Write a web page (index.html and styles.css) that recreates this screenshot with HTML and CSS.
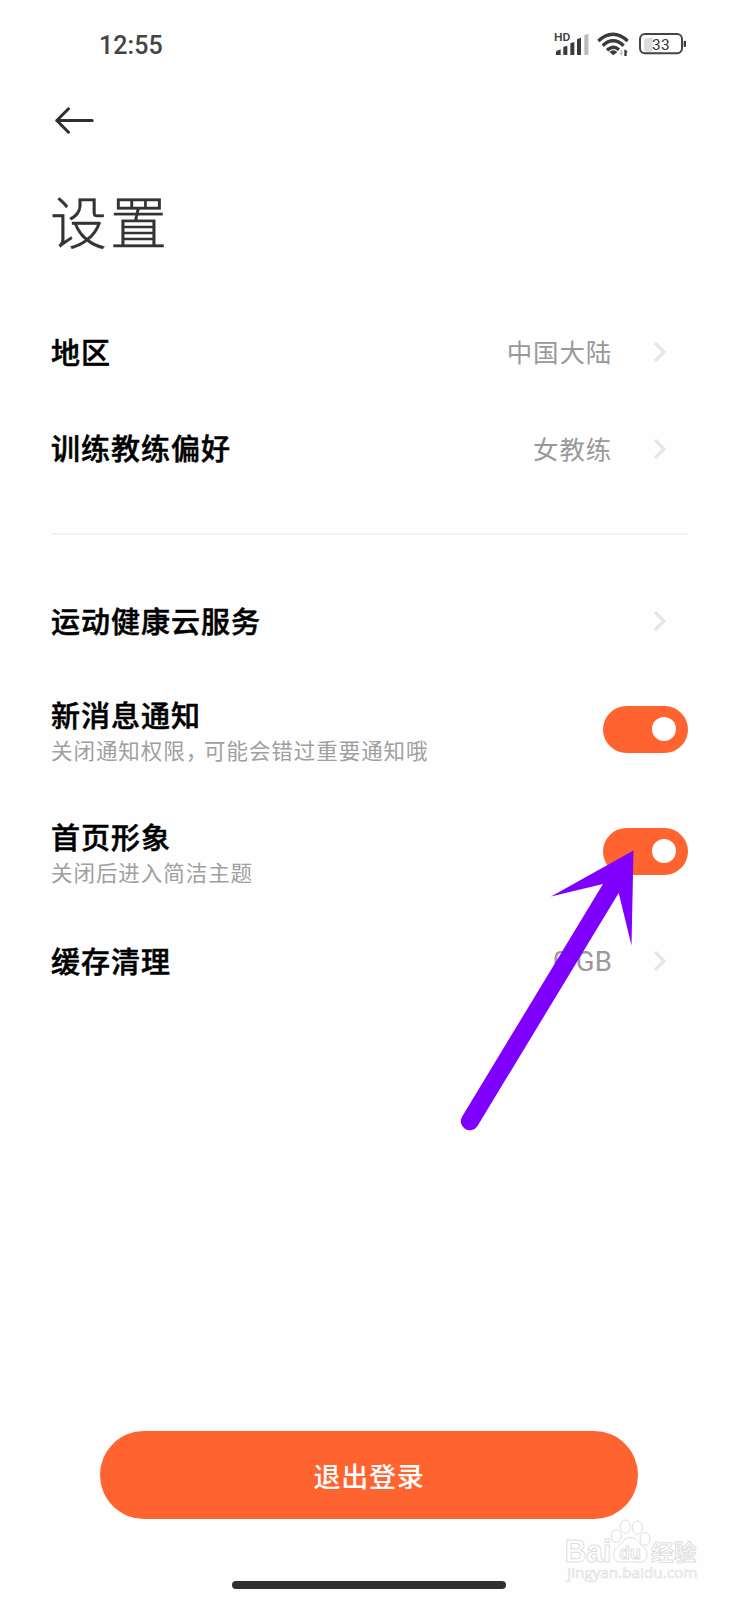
FILE: index.html
```
<!DOCTYPE html>
<html lang="zh-CN">
<head>
<meta charset="utf-8">
<title>设置</title>
<link rel="stylesheet" href="styles.css">
</head>
<body>
<div class="screen">
  <header class="status">
    <span class="time">12:55</span>
    <svg class="status-icons" width="180" height="60" viewBox="0 0 540 180">
      <text class="hd" x="72" y="79" textLength="49" lengthAdjust="spacingAndGlyphs">HD</text>
      <g fill="#3a3a3a">
        <path d="M78 120v-9q0-3 3-4l11-4v17z"/>
        <path d="M100 120V96l12-4v28z"/>
        <path d="M121 120V85l12-4v39z"/>
        <path d="M141 120V73l12-5v52z"/>
        <path d="M163 120V61l12-5v64z" fill="#bbb"/>
        <path d="M250 121l-12-10q12-10 24 0z"/>
        <path d="M283 123v-19h4l7 8h-4v11z"/>
        <path d="M277 104v19l-9-9h4v-8z" fill="#bbb"/>
        <rect x="461" y="77" width="7" height="19" rx="3"/>
      </g>
      <g fill="none" stroke="#3a3a3a" stroke-width="10">
        <path d="M205 78Q249 38 293 78"/>
        <path d="M218 92Q249 63 281 92"/>
        <path d="M231 106Q250 88 267 104"/>
      </g>
      <path d="M351 68h17v42h-17q-9 0-9-9V77q0-9 9-9z" fill="#ddd"/>
      <rect x="330" y="57" width="126" height="58" rx="15" fill="none" stroke="#444" stroke-width="6"/>
      <text class="charge" x="366" y="105" textLength="53">33</text>
    </svg>
  </header>

  <nav class="nav">
    <svg width="40" height="28" viewBox="0 0 40 28" fill="none" stroke="#2f2f2f" stroke-width="3" stroke-linecap="round" stroke-linejoin="round">
      <path d="M2.8 14.5H38.2M14.5 2.8L2.8 14.5 14.5 26.2"/>
    </svg>
  </nav>
  <h1 class="title">设置</h1>

  <main class="list">
    <div class="row region">
      <span class="label">地区</span><span class="value">中国大陆</span>
      <svg class="chev" viewBox="0 0 14 22"><path d="M2 2l9 9-9 9"/></svg>
    </div>
    <div class="row coach">
      <span class="label">训练教练偏好</span><span class="value">女教练</span>
      <svg class="chev" viewBox="0 0 14 22"><path d="M2 2l9 9-9 9"/></svg>
    </div>
    <hr class="divider">
    <div class="row cloud">
      <span class="label">运动健康云服务</span>
      <svg class="chev" viewBox="0 0 14 22"><path d="M2 2l9 9-9 9"/></svg>
    </div>
    <div class="row double">
      <div class="stack">
        <span class="label">新消息通知</span>
        <span class="sub">关闭通知权限<span class="comma">，</span>可能会错过重要通知哦</span>
      </div>
      <span class="switch"><i class="knob"></i></span>
    </div>
    <div class="row double">
      <div class="stack">
        <span class="label">首页形象</span>
        <span class="sub">关闭后进入简洁主题</span>
      </div>
      <span class="switch"><i class="knob"></i></span>
    </div>
    <div class="row cache">
      <span class="label">缓存清理</span><span class="value latin">0 GB</span>
      <svg class="chev" viewBox="0 0 14 22"><path d="M2 2l9 9-9 9"/></svg>
    </div>
  </main>

  <footer class="footer">
    <button class="logout">退出登录</button>
    <div class="home-bar"></div>
  </footer>

  <svg class="pointer" width="190" height="290" viewBox="450 845 190 290">
    <path fill="#8000ff" d="M633.5 850.5L631.5 945.5 618.7 893 477.5 1126A9 9 0 0 1 462.2 1116.5L603 884 551 896.5z"/>
  </svg>

  <svg class="watermark" width="188" height="100" viewBox="0 0 564 300">
    <g fill="#fff" stroke="#dedede" stroke-width="3">
      <text class="wm-brand" x="44" y="186" textLength="140" lengthAdjust="spacingAndGlyphs">Bai</text>
      <ellipse cx="199" cy="108" rx="15" ry="19"/>
      <ellipse cx="226" cy="80" rx="15" ry="20"/>
      <ellipse cx="262" cy="83" rx="15" ry="20"/>
      <ellipse cx="285" cy="117" rx="15" ry="19"/>
      <path d="M240 112c-17 0-23 15-31 23s-18 14-18 30c0 15 10 22 24 22 10 0 16-2 26-2s16 2 26 2c14 0 24-7 24-22 0-16-10-22-18-30s-15-23-33-23z"/>
      <text class="wm-du" x="208" y="176" textLength="64" lengthAdjust="spacingAndGlyphs">du</text>
      <text class="wm-cn" x="303" y="180" textLength="136" lengthAdjust="spacingAndGlyphs">经验</text>
      <text class="wm-url" x="52" y="235" textLength="390" lengthAdjust="spacingAndGlyphs">jingyan.baidu.com</text>
    </g>
  </svg>
</div>
</body>
</html>
```
FILE: styles.css
```
* { box-sizing: border-box; }
body {
  margin: 0;
  background: #fdfdfd;
  font-family: "Noto Sans CJK SC", sans-serif;
}
.screen {
  position: relative;
  display: flex;
  flex-direction: column;
  width: 738px;
  height: 1600px;
  overflow: hidden;
  background: #fefefe;
}
.status {
  display: flex;
  justify-content: space-between;
  height: 75px;
  padding: 15px 28px 0 99px;
}
.time {
  font: 500 25px/61px Roboto, sans-serif;
  letter-spacing: 0.1px;
  color: #444;
}
.hd { font: 600 32px Roboto, sans-serif; fill: #444; }
.charge { font: 400 46px Roboto, sans-serif; fill: #333; }
.nav { height: 60px; padding: 31px 0 0 54px; line-height: 0; }
.title {
  height: 165px;
  margin: 0;
  padding: 42px 0 0 50px;
  font-size: 57px;
  font-weight: 300;
  line-height: 84px;
  letter-spacing: 3px;
  color: #333;
  -webkit-text-stroke: 0.3px #333;
}
.list { padding: 0 50px 0 51px; }
.row { display: flex; align-items: center; }
.region { height: 104px; }
.coach { height: 89px; }
.divider { height: 2px; margin: 40px 0 0; border: 0; background: #f3f3f3; }
.cloud { height: 62px; margin: 55px 0 16px; }
.double { height: 122px; }
.cache { height: 64px; margin-top: 17px; }
.label {
  flex: 1;
  padding-bottom: 3px;
  font-size: 29px;
  font-weight: 500;
  line-height: 42px;
  letter-spacing: 1px;
  color: #000;
  white-space: nowrap;
  -webkit-text-stroke: 0.5px #000;
}
.value {
  margin-right: 41px;
  padding-bottom: 2px;
  font-size: 25.5px;
  line-height: 38px;
  letter-spacing: 0.8px;
  color: #999;
}
.latin { padding: 1px 0 0; font-family: Roboto, sans-serif; font-size: 27.5px; letter-spacing: 0.2px; font-weight: 400; }
.chev {
  width: 14px;
  height: 22px;
  margin-right: 21px;
  fill: none;
  stroke: #e6e6e6;
  stroke-width: 3.2;
}
.stack { flex: 1; display: flex; flex-direction: column; padding-top: 2px; }
.stack .label { line-height: 39px; padding-bottom: 0; }
.sub {
  font-size: 21.5px;
  line-height: 32px;
  letter-spacing: 0.95px;
  font-weight: 400;
  color: #a0a0a0;
  white-space: nowrap;
}
.comma { letter-spacing: -3.2px; }
.switch {
  display: flex;
  align-items: center;
  justify-content: flex-end;
  width: 85px;
  height: 47px;
  padding-right: 12px;
  border-radius: 24px;
  background: #ff6430;
}
.knob { width: 24px; height: 24px; border-radius: 50%; background: #fff; }
.footer {
  display: flex;
  flex-direction: column;
  align-items: center;
  margin-top: auto;
  padding-bottom: 11px;
}
.logout {
  width: 538px;
  height: 88px;
  margin-bottom: 62px;
  padding: 1px 0 0;
  border: 0;
  border-radius: 44px;
  background: #ff6430;
  color: #fff;
  font: 500 27px/87px "Noto Sans CJK SC", sans-serif;
  letter-spacing: 0.7px;
}
.home-bar { width: 274px; height: 8px; border-radius: 4px; background: #303030; }
.pointer { position: absolute; left: 450px; top: 845px; }
.watermark { position: absolute; left: 550px; top: 1500px; }
.wm-brand { font: 700 92px "Liberation Sans", sans-serif; }
.wm-du { font: 700 56px "Liberation Sans", sans-serif; }
.wm-cn { font: 700 66px "Noto Sans CJK SC", sans-serif; }
.wm-url { font: 400 42px "Open Sans", sans-serif; stroke-width: 1.8; }
```
